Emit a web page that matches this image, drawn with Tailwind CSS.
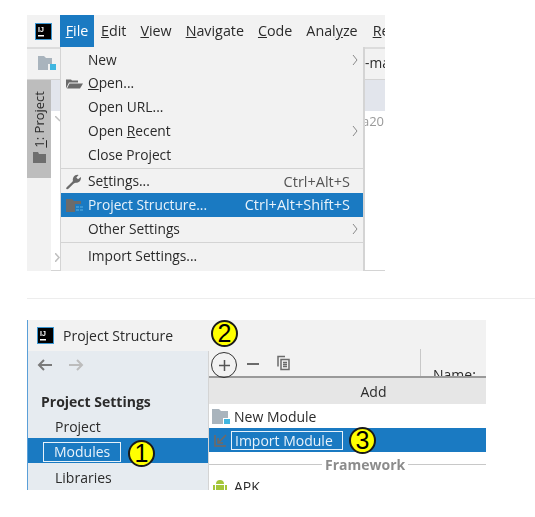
<!DOCTYPE html>
<html>
<head>
<meta charset="utf-8">
<script src="https://cdn.jsdelivr.net/npm/@tailwindcss/browser@4"></script>
</head>
<body class="relative bg-white w-[535px] h-[517px] overflow-hidden font-['Open_Sans','Noto_Sans',sans-serif] text-[13.75px] text-[#2b2b2b]">
<div class="flex flex-col pt-[15px] pl-[27px]">
  <!-- top screenshot -->
  <div class="relative w-[358px] h-[256px] bg-[#f2f2f2] overflow-hidden blur-[0.3px]">
    <div class="flex items-center h-8 border-b-2 border-[#dcdcdc] box-content -mb-0.5 text-[14.3px]">
      <div class="w-[33px] shrink-0 flex justify-center">
        <svg width="17" height="17" viewBox="0 0 17 17"><rect x="0.500" y="0.500" width="16" height="16" fill="#000" stroke="#3b97d3"/><text x="3" y="9" fill="#fff" font-size="7" font-weight="700" font-family="Liberation Sans">IJ</text><rect x="3" y="12" width="6" height="1.500" fill="#fff"/></svg>
      </div>
      <div class="w-[34px] shrink-0 h-8 bg-[#1a7ac2] text-white text-center leading-8"><u>F</u>ile</div>
      <div class="flex shrink-0 pl-[7px] gap-[14px] whitespace-nowrap">
        <span><u>E</u>dit</span><span><u>V</u>iew</span><span><u>N</u>avigate</span><span><u>C</u>ode</span><span>Anal<u>y</u>ze</span><span class="ml-[1px]"><u>R</u>e</span>
      </div>
    </div>
    <div class="flex h-[33px] items-center pl-[11px] border-b border-[#d4d4d4]">
      <svg class="shrink-0" width="18" height="16" viewBox="0 0 18 16"><path d="M0 1h6l2 2h6v6H10v6H0z" fill="#a9b4bd"/><rect x="12" y="9" width="6" height="6" fill="#40b6e0"/></svg>
      <span class="ml-[309px] whitespace-nowrap">-ma</span>
    </div>
    <div class="flex h-[191px]">
      <div class="w-6 h-[98px] bg-[#bdbdbd] flex flex-col items-center pt-[11px] gap-[4px]">
        <span class="[writing-mode:vertical-rl] rotate-180 text-[13px] leading-4 whitespace-nowrap"><u>1</u>: Project</span>
        <svg width="13" height="11" viewBox="0 0 13 11"><path d="M0 0h5l1 2h7v9H0z" fill="#6e6e6e"/></svg>
      </div>
      <div class="flex-1 flex flex-col">
        <div class="h-[31px] bg-[#e2e5ec]"></div>
        <div class="relative flex-1 bg-white border-b border-[#d4d4d4] flex justify-end pt-[2px] text-[#9a9a9a] text-[13px] leading-4 pr-[1px]">
          a20
          <svg class="absolute left-[4px] top-[5px]" width="6" height="6" viewBox="0 0 6 6" fill="none" stroke="#c0c0c0" stroke-width="1.500"><path d="M0 0l5 5"/></svg>
          <svg class="absolute left-[4px] top-[142px]" width="5" height="9" viewBox="0 0 5 9" fill="none" stroke="#c0c0c0" stroke-width="1.500"><path d="M0 0l4 4.500-4 4.500"/></svg>
        </div>
      </div>
    </div>
    <!-- file menu -->
    <div class="absolute left-[33px] top-8 w-[305px] h-[224px] bg-[#f2f2f2] border-l border-r-2 border-[#d4d4d4] flex flex-col pt-[1px]">
      <div class="h-[23.7px] flex items-center pl-[27px] relative">New<svg class="absolute right-[5px] top-[6px]" width="6" height="12" viewBox="0 0 6 12" fill="none" stroke="#8a8a8a"><path d="M1 1l4 5-4 5"/></svg></div>
      <div class="h-[23.7px] flex items-center pl-[27px] relative"><svg class="absolute left-[5px] top-[6px]" width="17" height="11" viewBox="0 0 17 10"><path d="M0 10V1h5l1 1h6v2H3L0 10zM3.500 5H17l-3 5H1z" fill="#6b6b6b"/></svg><span><u>O</u>pen...</span></div>
      <div class="h-[23.7px] flex items-center pl-[27px]">Open URL...</div>
      <div class="h-[23.7px] flex items-center pl-[27px] relative"><span>Open <u>R</u>ecent</span><svg class="absolute right-[5px] top-[6px]" width="6" height="12" viewBox="0 0 6 12" fill="none" stroke="#8a8a8a"><path d="M1 1l4 5-4 5"/></svg></div>
      <div class="h-[25px] flex items-center pl-[27px]">Close Project</div>
      <div class="h-px bg-[#d4d4d4]"></div>
      <div class="h-6 flex items-center pt-[2px] pl-[27px] pr-[13px] justify-between relative"><svg class="absolute left-[4px] top-[4px]" width="17" height="17" viewBox="0 0 15 14"><path d="M1 13c0-1 5-5 6-6.500C6.500 4 8 1 11 1l1 .3L10 3.500 11.500 5 14 3c.5 2-1 5-3.500 5-1.500 0-2 0-3 1l-4 4c-1 1-2.500 1-2.500 0z" fill="#6b6b6b"/></svg><span>Se<u>t</u>tings...</span><span class="text-[#555] text-[14.5px]">Ctrl+Alt+S</span></div>
      <div class="h-6 flex items-center pt-[1px] pl-[27px] pr-[13px] justify-between relative bg-[#1a7ac2] text-[#e8f2fa]"><svg class="absolute left-[5px] top-[6px]" width="18" height="13" viewBox="0 0 18 13"><path d="M0 0h6l2 2h7v3H9v8H0z" fill="#6b6b6b"/><path d="M10 7h3v2h-3zM14 7h3v2h-3zM10 10h3v2h-3zM14 10h3v2h-3z" fill="#3b97d3"/></svg><span>Project Structure...</span><span class="text-[14.5px]">Ctrl+Alt+Shift+S</span></div>
      <div class="h-6 flex items-center pt-[1px] pl-[27px] relative">Other Settings<svg class="absolute right-[5px] top-[6px]" width="6" height="12" viewBox="0 0 6 12" fill="none" stroke="#8a8a8a"><path d="M1 1l4 5-4 5"/></svg></div>
      <div class="h-px my-[1px] bg-[#d4d4d4]"></div>
      <div class="h-6 flex items-center pt-[1px] pl-[27px]">Import Settings...</div>
    </div>
  </div>
  <div class="h-px w-[508px] bg-[#ededed] mt-[27px]"></div>
  <!-- bottom screenshot -->
  <div class="relative w-[459px] h-[170px] mt-[21px] overflow-hidden bg-[#f2f2f2] border-l border-[#5a9fd8] blur-[0.3px] text-[14px]">
    <div class="flex items-center h-[31px] pl-[9px] gap-[9px]">
      <svg width="17" height="17" viewBox="0 0 17 17"><rect x="0.500" y="0.500" width="16" height="16" fill="#000" stroke="#3b97d3"/><text x="3" y="9" fill="#fff" font-size="7" font-weight="700" font-family="Liberation Sans">IJ</text><rect x="3" y="12" width="6" height="1.500" fill="#fff"/></svg>
      <span>Project Structure</span>
    </div>
    <div class="flex h-[139px]">
      <div class="w-[180px] shrink-0 bg-[#e6ebf0] flex flex-col">
        <div class="h-[29px] flex items-center pl-[9px] gap-[15px]">
          <svg width="16" height="12" viewBox="0 0 16 12" fill="none" stroke="#7a7a7a" stroke-width="2"><path d="M15 6H2M7 1L2 6l5 5"/></svg>
          <svg width="16" height="12" viewBox="0 0 16 12" fill="none" stroke="#bcbcbc" stroke-width="2"><path d="M1 6h13M9 1l5 5-5 5"/></svg>
        </div>
        <div class="h-[25px] mt-[9px] pt-[1px] flex items-center pl-[13px] font-bold">Project Settings</div>
        <div class="h-[25px] pt-[2px] flex items-center pl-[27px]">Project</div>
        <div class="h-[25px] flex items-center pl-[15px] bg-[#1a7ac2] text-[#e8f2fa]">
          <span class="h-5 w-[78px] mt-[2px] border border-[#e8f2fa] flex items-center pl-[10px]">Modules</span>
        </div>
        <div class="h-[27px] pt-[1px] flex items-center pl-[27px]">Libraries</div>
      </div>
      <div class="flex-1 flex flex-col min-w-0 border-l border-[#d4d4d4]">
        <div class="h-[25px] flex items-center relative">
          <svg class="absolute left-[38px] top-[7px]" width="12" height="12" viewBox="0 0 12 12"><path d="M0 6h12" stroke="#6b6b6b" stroke-width="2"/></svg>
          <svg class="absolute left-[66px] top-[4px]" width="15" height="16" viewBox="0 0 15 15" fill="none" stroke="#6b6b6b" stroke-width="1.500"><path d="M3 11V1h7"/><path d="M6 4h8v10H6zM8 7h4M8 9h4M8 11h4"/></svg>
          <div class="absolute left-[211px] -top-[2px] h-[30px] w-px bg-[#c8c8c8]"></div>
          <span class="absolute left-[224px] top-[16px] leading-4">Name:</span>
        </div>
        <div class="h-[28px] z-10 bg-[#e6e6e6] border-t-2 border-[#9a9a9a] flex items-center justify-center pl-[52px]">Add</div>
        <div class="h-6 z-10 bg-white flex items-center pl-[25px] relative">
          <svg class="absolute left-[3px] top-[5px]" width="18" height="15" viewBox="0 0 18 15"><path d="M0 0h7l2 2h7v7h-5v6H0z" fill="#a9b4bd"/><rect x="12" y="10" width="6" height="5" fill="#40b6e0"/></svg>
          New Module
        </div>
        <div class="h-6 z-10 bg-[#1a7ac2] text-[#e8f2fa] flex items-center pl-[22px] relative">
          <svg class="absolute left-[5px] top-[6px]" width="13" height="13" viewBox="0 0 13 13" fill="none" stroke="#77685f" stroke-width="1.500"><path d="M1 1v11h11M4 9l8-8M4 4v5h5"/></svg>
          <span class="h-[19px] w-[112px] border border-[#e8f2fa] flex items-center pl-[3px] whitespace-nowrap">Import Module</span>
        </div>
        <div class="h-[24px] z-10 bg-white flex items-center font-bold text-[#8c8c8c]">
          <div class="h-px w-[113px] bg-[#c8c8c8]"></div>
          <span class="px-[3px]">Framework</span>
          <div class="h-px flex-1 bg-[#c8c8c8]"></div>
        </div>
        <div class="h-[14px] z-10 bg-white flex items-start pl-[25px] relative">
          <svg class="absolute left-[4px] top-[3px]" width="14" height="13" viewBox="0 0 14 13"><path d="M0 6h2v7H0zM12 6h2v7h-2zM3 6h8v7H3zM3 5a4 4 0 0 1 8 0z" fill="#a4c639"/></svg>
          <span class="leading-[18px] mt-[2px]">APK</span>
        </div>
      </div>
    </div>
  </div>
</div>
<!-- annotations over the screenshot -->
<div class="absolute left-[211px] top-[320px] w-[27px] h-[27px] rounded-full bg-[#ffff00] border-2 border-[#1a1a1a] flex items-center justify-center text-[25px] leading-none font-['Liberation_Sans'] text-black">2</div>
<div class="absolute left-[211px] top-[352px] w-[26px] h-[26px] rounded-full border-[1.5px] border-[#333] flex items-center justify-center"><svg width="11" height="11" viewBox="0 0 11 11"><path d="M5.500 0v11M0 5.500h11" stroke="#555" stroke-width="1.500"/></svg></div>
<div class="absolute left-[128px] top-[440px] w-[27px] h-[27px] rounded-full bg-[#ffff00] border-2 border-[#1a1a1a] flex items-center justify-center text-[25px] leading-none font-['Liberation_Sans'] text-black">1</div>
<div class="absolute left-[349px] top-[427px] w-[27px] h-[27px] rounded-full bg-[#ffff00] border-2 border-[#1a1a1a] flex items-center justify-center text-[25px] leading-none font-['Liberation_Sans'] text-black">3</div>
</body>
</html>
